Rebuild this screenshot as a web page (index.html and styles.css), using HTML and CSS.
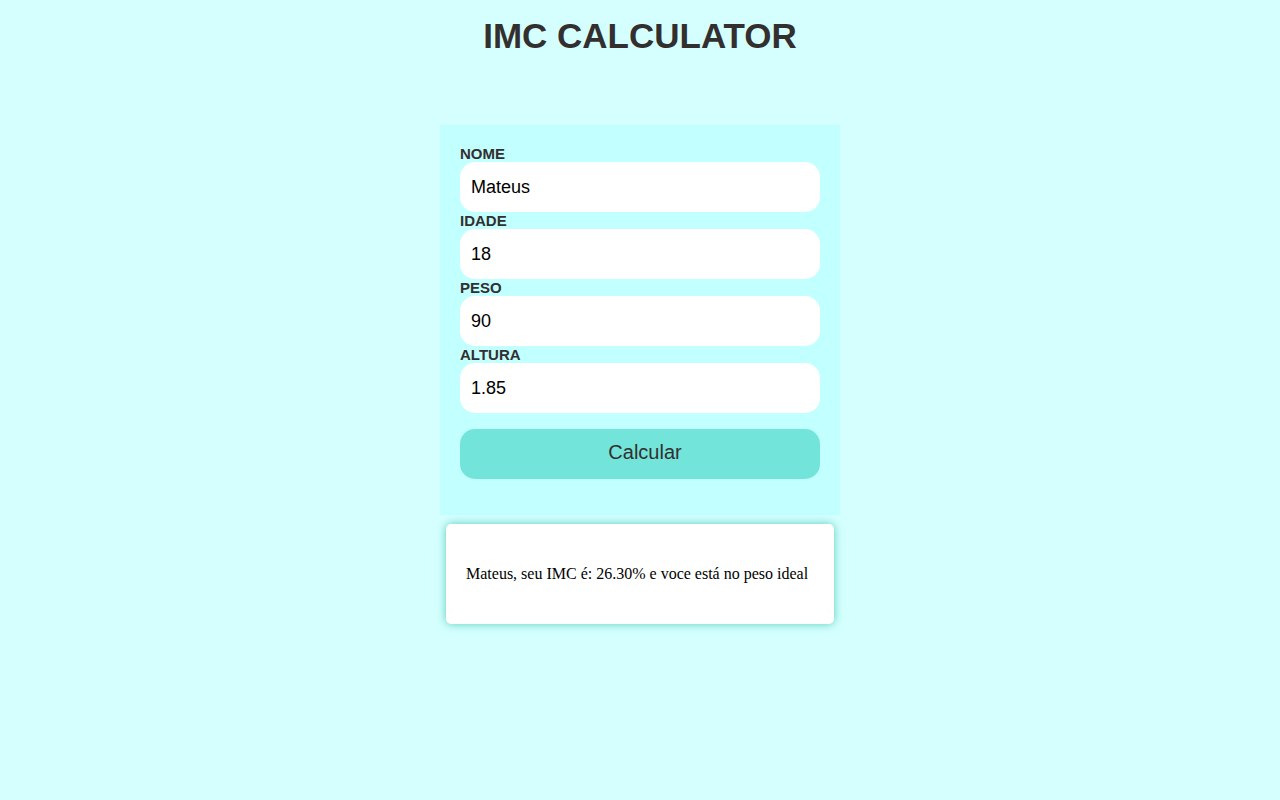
FILE: index.html
```html
<!DOCTYPE html>
<html lang="pt-BR">
<head>
  <meta charset="UTF-8">
  <meta name="viewport" content="width=device-width, initial-scale=1">
  <title>IMC Calculator</title>
  <link rel="stylesheet" href="styles.css">
</head>
<body>
  <h1 class="title">IMC CALCULATOR</h1>
  <main class="calculator">
    <form class="form">
      <label class="label" for="nome">NOME</label>
      <input class="field" id="nome" type="text" value="Mateus">
      <label class="label" for="idade">IDADE</label>
      <input class="field" id="idade" type="text" value="18">
      <label class="label" for="peso">PESO</label>
      <input class="field" id="peso" type="text" value="90">
      <label class="label" for="altura">ALTURA</label>
      <input class="field" id="altura" type="text" value="1.85">
      <button class="submit" type="button">Calcular</button>
    </form>
    <output class="result">Mateus, seu IMC é: 26.30% e voce está no peso ideal</output>
  </main>
</body>
</html>
```
FILE: styles.css
```css
* {
  box-sizing: border-box;
}

body {
  min-height: 100vh;
  margin: 0;
  padding: 16px 0;
  background: #d5ffff;
  color: #332f2f;
  font-family: "Liberation Sans", Arial, sans-serif;
}

.title {
  margin: 0 0 69px;
  font-size: 35px;
  line-height: 40px;
  text-align: center;
}

.calculator {
  display: flex;
  flex-direction: column;
  gap: 9px;
  width: 100%;
  max-width: 400px;
  margin: 0 auto;
}

.form {
  display: flex;
  flex-direction: column;
  padding: 20px 20px 36px;
  background: #c2ffff;
}

.label {
  font-size: 15px;
  font-weight: bold;
  line-height: 17px;
}

.field {
  width: 100%;
  height: 50px;
  padding: 0 11px;
  border: 0;
  border-radius: 15px;
  background: #fff;
  color: #000;
  font: 18px "Liberation Sans", Arial, sans-serif;
}

.submit {
  height: 50px;
  margin-top: 16px;
  padding: 0 0 4px 10px;
  border: 0;
  border-radius: 15px;
  background: #72e4d9;
  color: #332f2f;
  font: 20px "Liberation Sans", Arial, sans-serif;
  cursor: pointer;
}

.result {
  margin: 0 6px;
  padding: 40px 20px;
  border-radius: 5px;
  background: #fff;
  box-shadow: 0 0 10px #58cdbb;
  color: #000;
  font: 16px/20px "Liberation Serif", "Times New Roman", serif;
}
```
